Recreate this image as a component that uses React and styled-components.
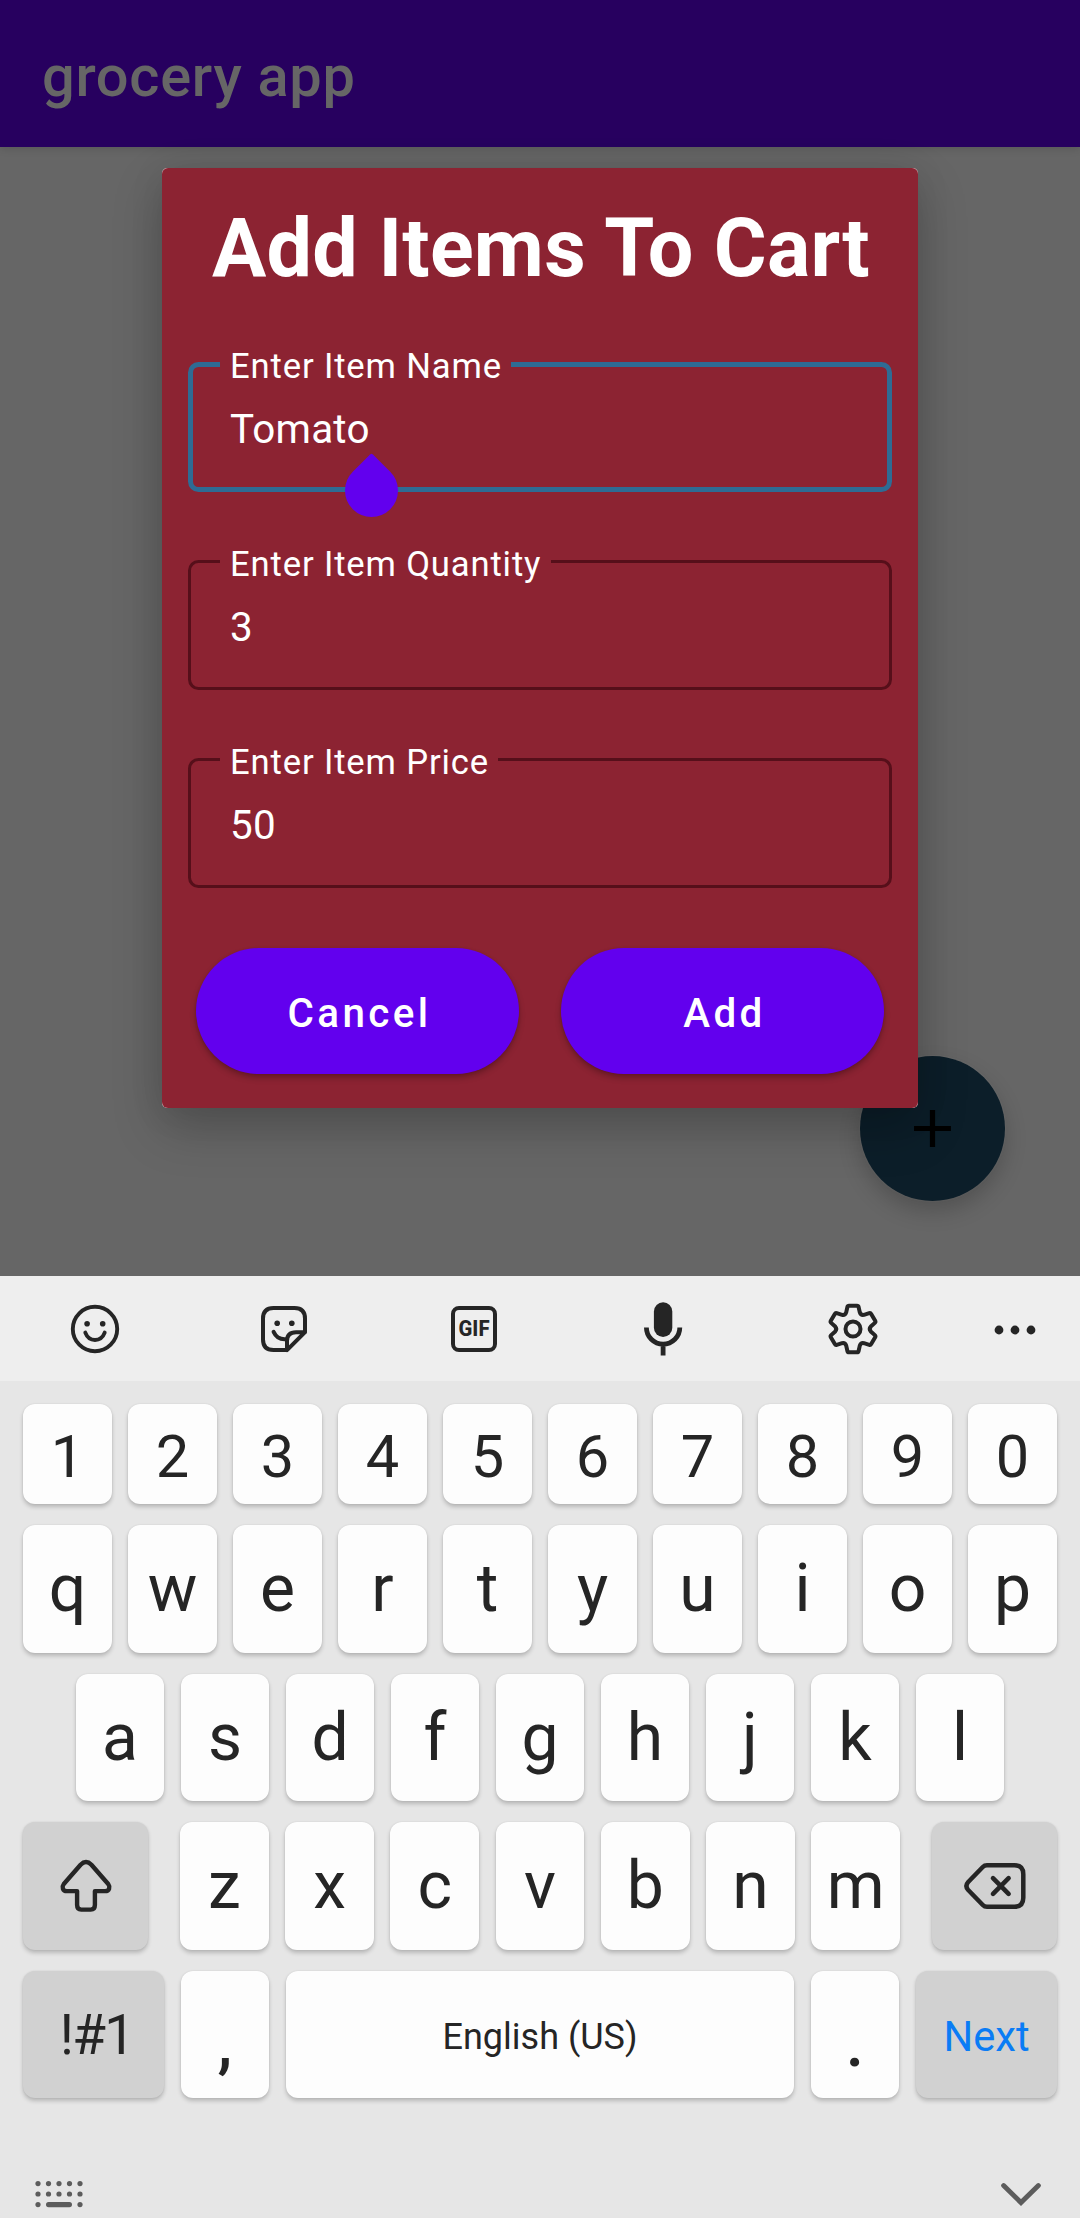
import React from "react";
import styled, { createGlobalStyle } from "styled-components";

const GlobalStyle = createGlobalStyle`
  * { box-sizing: border-box; }
  body { margin: 0; background: #666666; }
  button { font: inherit; border: 0; margin: 0; padding: 0; }
`;

const Screen = styled.div`
  position: relative;
  display: flex;
  flex-direction: column;
  width: 1080px;
  height: 2218px;
  overflow: hidden;
  background: #666666;
  font-family: Roboto, "Liberation Sans", sans-serif;
`;

const AppBar = styled.header`
  flex: none;
  display: flex;
  align-items: center;
  height: 147px;
  padding: 4px 42px 0;
  background: #27005f;
  box-shadow: 0 2px 8px rgba(0, 0, 0, 0.13);
`;

const AppTitle = styled.h1`
  margin: 0;
  font-size: 57.75px;
  font-weight: 500;
  line-height: 68px;
  letter-spacing: 0.7px;
  color: #666666;
`;

const Content = styled.main`
  position: relative;
  flex: 1;
`;

const Fab = styled.button`
  position: absolute;
  right: 75px;
  bottom: 75px;
  display: flex;
  align-items: center;
  justify-content: center;
  width: 145px;
  height: 145px;
  border-radius: 50%;
  background: #0c1e29;
  box-shadow: 0 10px 22px rgba(0, 0, 0, 0.2), 0 0 2px rgba(140, 140, 140, 0.5);
`;

const Dialog = styled.section`
  position: absolute;
  top: 168px;
  left: 162px;
  width: 756px;
  border-radius: 5px;
  background: #d8c4c8;
  box-shadow: 0 20px 50px rgba(0, 0, 0, 0.22), 0 4px 36px rgba(0, 0, 0, 0.08);
`;

const DialogBody = styled.div`
  display: flex;
  flex-direction: column;
  height: 940px;
  padding: 33px 26px 34px;
  border-radius: 6px;
  background: #8c2332;
`;

const DialogTitle = styled.h2`
  margin: 0 0 66px;
  padding-left: 2px;
  font-size: 80.85px;
  font-weight: 700;
  line-height: 95px;
  letter-spacing: 0.25px;
  text-align: center;
  white-space: nowrap;
  color: #ffffff;
`;

const Fields = styled.div`
  display: flex;
  flex-direction: column;
  gap: 68px;
`;

const Field = styled.div`
  --bw: ${(p) => (p.$focused ? "5px" : "3px")};
  position: relative;
  display: flex;
  align-items: center;
  height: 130px;
  padding: 6px 0 0 calc(42px - var(--bw));
  border: var(--bw) solid ${(p) => (p.$focused ? "#2e6b94" : "#560f1a")};
  border-radius: 10.5px;
`;

const FieldLabel = styled.label`
  position: absolute;
  top: calc(-16px - var(--bw));
  left: calc(32px - var(--bw));
  padding: 0 9.5px 0 10px;
  font-size: 34.65px;
  line-height: 41px;
  letter-spacing: 0.84px;
  white-space: nowrap;
  color: #ffffff;
  background: #8c2332;
`;

const FieldValue = styled.span`
  font-size: 40.4px;
  line-height: 48px;
  letter-spacing: 0.2px;
  color: #ffffff;
`;

const CursorHandle = styled.span`
  position: absolute;
  left: 152px;
  top: 97px;
  width: 53px;
  height: 53px;
  border-radius: 2px 50% 50% 50%;
  transform: rotate(45deg);
  background: #6200ee;
`;

const Actions = styled.div`
  display: flex;
  gap: 42px;
  margin-top: 60px;
  padding: 0 8px;
`;

const PillButton = styled.button`
  flex: 1;
  height: 126px;
  padding: 5px 0 0 4px;
  border-radius: 63px;
  font-size: 40.4px;
  font-weight: 500;
  line-height: 48px;
  letter-spacing: 3.4px;
  color: #ffffff;
  background: #6200ee;
  box-shadow: 0 4px 6px rgba(0, 0, 0, 0.24), 0 1px 3px rgba(0, 0, 0, 0.1);
`;

const Keyboard = styled.section`
  flex: none;
  display: flex;
  flex-direction: column;
  height: 942px;
  background: #e6e6e6;
`;

const Toolbar = styled.div`
  flex: none;
  display: grid;
  grid-template-columns: repeat(5, 189.5px) 135px;
  align-items: center;
  justify-items: center;
  height: 105px;
  background: #eeeeee;
`;

const KeyRows = styled.div`
  display: flex;
  flex-direction: column;
  gap: 21px;
  padding: 23px 23px 0;
`;

const KeyRow = styled.div`
  display: grid;
  grid-template-columns: ${(p) => p.$columns};
  column-gap: ${(p) => p.$gap}px;
  height: ${(p) => p.$height}px;
  padding: 0 ${(p) => p.$inset || 0}px;
`;

const Key = styled.button`
  display: flex;
  align-items: center;
  justify-content: center;
  min-width: 0;
  padding-top: ${(p) => p.$drop || 0}px;
  border-radius: 12px;
  font-size: ${(p) => p.$size || 66}px;
  font-weight: ${(p) => p.$weight || 400};
  line-height: 1;
  white-space: nowrap;
  color: ${(p) => p.$color || "#252525"};
  background: ${(p) => (p.$dark ? "#d1d1d1" : "#fdfdfd")};
  box-shadow: 0 3px 4px rgba(0, 0, 0, 0.2), 0 0 2px rgba(0, 0, 0, 0.09);
`;

const SymbolsKey = styled(Key)`
  padding-left: 6px;
  letter-spacing: -1.8px;
`;

const NavStrip = styled.div`
  display: flex;
  align-items: flex-start;
  justify-content: space-between;
  padding: 83px 39px 0 35px;
`;

const Icon = styled.svg`
  display: block;
  overflow: visible;
  fill: none;
  stroke: ${(p) => p.$color || "#252525"};
  stroke-linecap: ${(p) => p.$cap || "round"};
  stroke-linejoin: ${(p) => p.$join || "round"};
`;

const DotsIcon = styled(Icon)`
  margin-top: 3px;
`;

const GifText = styled.text`
  font-family: Roboto, "Liberation Sans", sans-serif;
  font-size: 22px;
  font-weight: 800;
  fill: #252525;
  stroke: none;
`;

const turn = ([x, y], deg) => {
  const a = (deg * Math.PI) / 180;
  const rx = x * Math.cos(a) - y * Math.sin(a);
  const ry = x * Math.sin(a) + y * Math.cos(a);
  return `${rx.toFixed(2)} ${ry.toFixed(2)}`;
};

const gearPath =
  [0, 60, 120, 180, 240, 300]
    .map((deg, i) => {
      const p = (x, y) => turn([x, y], deg);
      return `${i ? "L" : "M"}${p(-6.8, -16.6)} L${p(-5.6, -22)} Q${p(-5.3, -23.3)} ${p(-4, -23.3)} L${p(4, -23.3)} Q${p(5.3, -23.3)} ${p(5.6, -22)} L${p(6.8, -16.6)} Q${p(7.8, -13.6)} ${p(10.98, -14.19)}`;
    })
    .join(" ") + "Z";

const SmileIcon = () => (
  <Icon width="48" height="48" viewBox="-24 -24 48 48" strokeWidth="3.9">
    <circle r="22.2" />
    <path d="M-9.7 3.6C-6 13.4 6 13.4 9.7 3.6" />
    <g fill="#252525" stroke="none">
      <circle cx="-7.9" cy="-5.2" r="2.8" />
      <circle cx="7.7" cy="-5.2" r="2.8" />
    </g>
  </Icon>
);

const StickerIcon = () => (
  <Icon width="46" height="46" viewBox="0 0 46 46" strokeWidth="4">
    <path d="M26 44.1H12.5Q2 44.1 2 33.6V12.5Q2 2 12.5 2H33.5Q44 2 44 12.5V26.2L26 44.1V35Q26 26.2 35 26.2H44" />
    <path d="M12.6 25.9Q16.2 33.9 25 33.2" />
    <g fill="#252525" stroke="none">
      <circle cx="16.2" cy="17.2" r="2.8" />
      <circle cx="30.8" cy="17.2" r="2.8" />
    </g>
  </Icon>
);

const GifIcon = () => (
  <Icon width="46" height="46" viewBox="0 0 46 46" strokeWidth="4">
    <rect x="2" y="2" width="42" height="42" rx="6" />
    <GifText x="23" y="30.4" textAnchor="middle" textLength="31" lengthAdjust="spacingAndGlyphs">GIF</GifText>
  </Icon>
);

const MicIcon = () => (
  <Icon $cap="butt" width="38" height="54" viewBox="0 0 38 54" strokeWidth="4.8">
    <rect x="9.9" y="0.3" width="18.4" height="34.7" rx="9.2" fill="#252525" stroke="none" />
    <path d="M2.4 25.4A16.7 16.7 0 0 0 35.8 25.4M19.1 42V53.4" />
  </Icon>
);

const GearIcon = () => (
  <Icon width="50" height="52" viewBox="-25 -26 50 52" strokeWidth="4">
    <path d={gearPath} />
    <circle r="7.5" />
  </Icon>
);

const MoreIcon = () => (
  <DotsIcon width="42" height="10" viewBox="-21 -5 42 10">
    <g fill="#252525" stroke="none">
      <circle cx="-16" r="4.4" />
      <circle r="4.4" />
      <circle cx="16" r="4.4" />
    </g>
  </DotsIcon>
);

const ShiftIcon = () => (
  <Icon width="52" height="54" viewBox="-26 -27 52 54" strokeWidth="4.4">
    <path d="M-8.9 5.1H-19C-23.5 5.1-24.4 1-22.2-2L-5.4-21.2Q0-26.8 5.4-21.2L22.2-2C24.4 1 23.5 5.1 19 5.1H8.9V19Q8.9 23.6 4.8 23.6H-4.8Q-8.9 23.6-8.9 19Z" />
  </Icon>
);

const BackspaceIcon = () => (
  <Icon width="62" height="48" viewBox="-31 -24 62 48" strokeWidth="4.5">
    <path d="M-8-20.8H19.3Q28.3-20.8 28.3-11.8V11.8Q28.3 20.8 19.3 20.8H-8Q-10.5 20.8-12.2 19L-26.8 4Q-30.4 0-26.8-4L-12.2-19Q-10.5-20.8-8-20.8Z" />
    <path d="M-2-7.8L13.6 7.8M13.6-7.8L-2 7.8" strokeWidth="4.6" />
  </Icon>
);

const KeyboardIcon = () => (
  <Icon width="48" height="26" viewBox="0 0 48 26">
    <g fill="#5c5c5c" stroke="none">
      {[3, 13.5, 24, 34.5, 45].map((x) => (
        <React.Fragment key={x}>
          <circle cx={x} cy="2.6" r="2.6" />
          <circle cx={x} cy="13" r="2.6" />
        </React.Fragment>
      ))}
      <circle cx="3" cy="23.6" r="2.6" />
      <circle cx="45" cy="23.6" r="2.6" />
      <rect x="11" y="21" width="26" height="5.2" rx="2.6" />
    </g>
  </Icon>
);

const HideIcon = () => (
  <Icon $color="#5c5c5c" $join="miter" width="40" height="24" viewBox="0 0 40 24" strokeWidth="4.9">
    <path d="M2.6 4.6L20 21.6L37.4 4.6" />
  </Icon>
);

const PlusIcon = () => (
  <Icon $color="#000000" $cap="butt" width="37" height="37" viewBox="-18.5 -18.5 37 37" strokeWidth="5.2">
    <path d="M-18.4 0H18.4M0-18.4V18.4" />
  </Icon>
);

const fields = [
  { label: "Enter Item Name", value: "Tomato", focused: true },
  { label: "Enter Item Quantity", value: "3" },
  { label: "Enter Item Price", value: "50" },
];

const letters = (text) => [...text].map((c) => <Key key={c}>{c}</Key>);

export default function App() {
  return (
    <Screen>
      <GlobalStyle />
      <AppBar>
        <AppTitle>grocery app</AppTitle>
      </AppBar>
      <Content>
        <Fab aria-label="Add item">
          <PlusIcon />
        </Fab>
      </Content>
      <Dialog>
        <DialogBody>
          <DialogTitle>Add Items To Cart</DialogTitle>
          <Fields>
            {fields.map((f) => (
              <Field key={f.label} $focused={f.focused}>
                <FieldLabel>{f.label}</FieldLabel>
                <FieldValue>{f.value}</FieldValue>
                {f.focused && <CursorHandle />}
              </Field>
            ))}
          </Fields>
          <Actions>
            <PillButton>Cancel</PillButton>
            <PillButton>Add</PillButton>
          </Actions>
        </DialogBody>
      </Dialog>
      <Keyboard>
        <Toolbar>
          <SmileIcon />
          <StickerIcon />
          <GifIcon />
          <MicIcon />
          <GearIcon />
          <MoreIcon />
        </Toolbar>
        <KeyRows>
          <KeyRow $columns="repeat(10, 1fr)" $gap={16} $height={100}>
            {[..."1234567890"].map((c) => (
              <Key key={c} $size={59.5} $drop={7}>{c}</Key>
            ))}
          </KeyRow>
          <KeyRow $columns="repeat(10, 1fr)" $gap={16} $height={128}>
            {letters("qwertyuiop")}
          </KeyRow>
          <KeyRow $columns="repeat(9, 1fr)" $gap={17} $height={127} $inset={53}>
            {letters("asdfghjkl")}
          </KeyRow>
          <KeyRow $columns="125px 720px 125px" $gap={32} $height={128}>
            <Key $dark aria-label="Shift"><ShiftIcon /></Key>
            <KeyRow $columns="repeat(7, 1fr)" $gap={16.6} $height={128}>
              {letters("zxcvbnm")}
            </KeyRow>
            <Key $dark aria-label="Backspace"><BackspaceIcon /></Key>
          </KeyRow>
          <KeyRow $columns="141px 88px 508px 88px 141px" $gap={17} $height={127}>
            <SymbolsKey $dark $size={54.8} $drop={2}>!#1</SymbolsKey>
            <Key $drop={18} $weight={500}>,</Key>
            <Key $size={36} $drop={4}>English (US)</Key>
            <Key $drop={18} $weight={500}>.</Key>
            <Key $dark $size={41.7} $drop={4} $color="#0a7cf5">Next</Key>
          </KeyRow>
        </KeyRows>
        <NavStrip>
          <KeyboardIcon />
          <HideIcon />
        </NavStrip>
      </Keyboard>
    </Screen>
  );
}
